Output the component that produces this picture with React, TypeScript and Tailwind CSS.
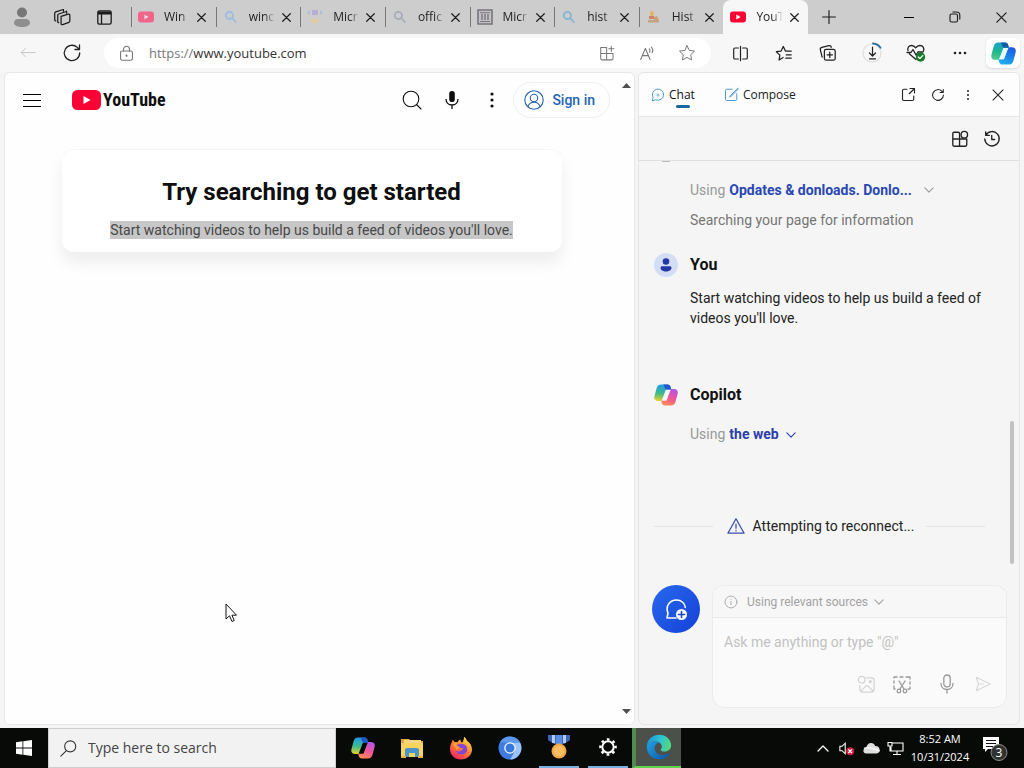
import type { ReactNode } from "react";

const SEGOE = "font-['Open_Sans','Noto_Sans',sans-serif]";

function Line({ size = 20, width = 1.3, children, className = "" }: { size?: number; width?: number; children: ReactNode; className?: string }) {
  return (
    <svg width={size} height={size} viewBox="0 0 20 20" fill="none" stroke="currentColor" strokeWidth={width} strokeLinecap="round" strokeLinejoin="round" className={className} aria-hidden="true">
      {children}
    </svg>
  );
}

function Cross({ size = 9, width = 1.3 }: { size?: number; width?: number }) {
  return (
    <svg width={size} height={size} viewBox="0 0 10 10" stroke="currentColor" strokeWidth={width} strokeLinecap="round" aria-hidden="true">
      <path d="M.8.8l8.4 8.4M9.2.8L.8 9.2" />
    </svg>
  );
}

function Play({ faded = false }: { faded?: boolean }) {
  return (
    <svg width="16" height="12" viewBox="0 0 16 12" aria-hidden="true">
      <rect y=".5" width="16" height="11" rx="3" fill={faded ? "#f0668a" : "#fb0434"} />
      <path d="M6.3 3.6v4.8L10.6 6z" fill="#fff" opacity={faded ? 0.75 : 1} />
    </svg>
  );
}

function Magnifier({ color }: { color: string }) {
  return (
    <svg width="14" height="14" viewBox="0 0 14 14" fill="none" stroke={color} strokeWidth="1.8" strokeLinecap="round" aria-hidden="true">
      <circle cx="5.4" cy="5.4" r="3.6" />
      <path d="M8.2 8.2l3.6 3.8" />
    </svg>
  );
}

function CopilotLogo({ size = 24, blue = false, id, hole }: { size?: number; blue?: boolean; id: string; hole: string }) {
  return (
    <svg width={size} height={size} viewBox="0 0 24 24" aria-hidden="true">
      <defs>
        <linearGradient id={id + "a"} x1="6" y1="1" x2="4" y2="18" gradientUnits="userSpaceOnUse">
          <stop stopColor={blue ? "#18a0c9" : "#1f9bee"} />
          <stop offset=".55" stopColor={blue ? "#1fb98e" : "#3fb98a"} />
          <stop offset="1" stopColor={blue ? "#54c98b" : "#e8d32d"} />
        </linearGradient>
        <linearGradient id={id + "b"} x1="19" y1="6" x2="12" y2="23" gradientUnits="userSpaceOnUse">
          <stop stopColor={blue ? "#1b5be0" : "#b455e8"} />
          <stop offset=".5" stopColor={blue ? "#1c84ea" : "#f0559a"} />
          <stop offset="1" stopColor={blue ? "#23b3f0" : "#fb8f4d"} />
        </linearGradient>
      </defs>
      <path d="M11 22.6c-2 0-2.8-1.1-3.3-2.800l-.6-2.300h5.200L17 5.900h3c3 0 4.400 2 3.600 5.100l-2 7.600c-.7 2.700-2.300 4-4.900 4z" fill={`url(#${id}b)`} />
      <path d="M13 1.400c2.200 0 3 1 3.500 2.800l.6 2.300h-5L7.500 18.100H4.200c-3 0-4.500-2-3.700-5.100l2-7.600c.7-2.700 2.300-4 4.800-4z" fill={`url(#${id}a)`} />
      <path d="M11 1.400h2.500c2 0 2.800 1.200 3.200 2.900l.5 2.200h-4.300c-1.600 0-2-1.200-2.400-2.800-.3-1.300-.7-2.100-1.500-2.300z" fill={blue ? "#105ca8" : "#2557c8"} />
      <path d="M13 7h3.800c-.7 0-1.200.6-1.500 1.600l-2.200 7.300c-.3 1-.8 1.600-1.700 1.600H7.700c.8-.1 1.200-.8 1.500-1.700l2.100-7.100c.3-1.100.8-1.700 1.700-1.700z" fill={hole} />
    </svg>
  );
}

const tabs: { title: string; icon: ReactNode; active?: boolean }[] = [
  { title: "Win", icon: <Play faded /> },
  { title: "winc", icon: <Magnifier color="#9bbce0" /> },
  {
    title: "Micr",
    icon: (
      <svg width="16" height="16" viewBox="0 0 16 16" aria-hidden="true">
        <path d="M5 1h6v5H5z" fill="#b7add6" />
        <path d="M3 1L0 3.500 3 6zM13 1l3 2.500L13 6z" fill="#b0bcd8" />
        <path d="M4 10h8l-1 4H5z" fill="#e0cda4" />
      </svg>
    ),
  },
  { title: "offic", icon: <Magnifier color="#a9adb6" /> },
  {
    title: "Micr",
    icon: (
      <svg width="16" height="16" viewBox="0 0 16 16" fill="none" stroke="#77757a" aria-hidden="true">
        <path d="M1 1h14v14H1z" fill="#c4c2c5" strokeWidth="1.600" />
        <path d="M3 3.700h10M3 12.500h10" />
        <path d="M5 5v6M8 5v6M11 5v6" strokeWidth="1.400" />
      </svg>
    ),
  },
  { title: "hist", icon: <Magnifier color="#83b4d6" /> },
  {
    title: "Hist",
    icon: (
      <svg width="16" height="16" viewBox="0 0 16 16" aria-hidden="true">
        <path d="M5 1l3 3-1 4-3-2z" fill="#dfb45a" />
        <path d="M3 7h5v3H3z" fill="#cf7f6c" />
        <path d="M8 8l3-1 2 4H8z" fill="#c9a56c" />
        <path d="M2 11h11v2.500H2z" fill="#c0a287" />
      </svg>
    ),
  },
  { title: "YouT", icon: <Play />, active: true },
];

function TitleBar() {
  return (
    <header className="flex h-[34px] items-stretch bg-[#cdcdcd] text-[#1b1b1b]">
      <div className="flex w-[131px] shrink-0 items-center">
        <button aria-label="Profile" className="flex w-11 justify-center">
          <svg width="18" height="20" viewBox="0 0 18 20" fill="#777" aria-hidden="true">
            <circle cx="9" cy="5.500" r="5" />
            <path d="M1 16c0-2.500 2-4 4-4h8c2 0 4 1.500 4 4 0 2.500-4 4-8 4s-8-1.500-8-4z" fill="#8e8e8e" />
          </svg>
        </button>
        <button aria-label="Workspaces" className="flex w-9 justify-center">
          <Line size={19}>
            <path d="M8.500 8.800l7.500-2.300c1-.3 1.700.2 1.700 1v6.300c0 .7-.3 1.200-1 1.400l-6.500 2.300c-1 .3-1.700-.2-1.700-1z" />
            <path d="M6 15.500c-.6 0-1-.5-1-1V7.700c0-.7.4-1.200 1-1.400l8-2.600M3 13.500c-.7 0-1.200-.5-1.200-1.200V5.500c0-.7.4-1.200 1-1.400l8-2.500M14.300 5.500V3.400M11 3.300V1.600" />
          </Line>
        </button>
        <button aria-label="Tab actions menu" className="flex w-12 justify-center">
          <svg width="15" height="15" viewBox="0 0 15 15" fill="none" stroke="currentColor" strokeWidth="1.300" aria-hidden="true">
            <rect x=".8" y=".8" width="13.400" height="13.400" rx="1.800" />
            <path d="M1 3h13" strokeWidth="3" />
            <path d="M4.500 4v10" />
          </svg>
        </button>
      </div>
      <nav aria-label="Tabs" className="flex max-w-[677px] min-w-0 flex-1 items-stretch">
        {tabs.map((tab, i) => (
          <div key={i} className={tab.active ? "flex min-w-0 flex-1 items-center rounded-t-lg bg-[#f7f7f7] pr-[3px]" : "flex min-w-0 flex-1 items-center pr-[3px]"}>
            <span className={tab.active ? "mr-1.5 h-5 w-px shrink-0" : "mr-1.5 h-5 w-px shrink-0 bg-[#777]"} />
            <span className="flex w-4 shrink-0 justify-center">{tab.icon}</span>
            <a href="#" className="ml-2.5 min-w-0 flex-1 mask-r-from-60% text-[12px] leading-5 whitespace-nowrap text-[#222]">
              {tab.title}
            </a>
            <button aria-label={`Close ${tab.title}`} className="flex w-[22px] shrink-0 justify-center">
              <Cross />
            </button>
          </div>
        ))}
      </nav>
      <button aria-label="New tab" className="flex w-[42px] items-center justify-center">
        <Line size={16} width={1.4}>
          <path d="M10 2v16M2 10h16" />
        </Line>
      </button>
      <div className="ml-auto flex">
        <button aria-label="Minimize" className="flex w-[46px] items-center justify-center">
          <span className="h-px w-2.5 bg-black" />
        </button>
        <button aria-label="Restore" className="flex w-[46px] items-center justify-center">
          <svg width="12" height="12" viewBox="0 0 12 12" fill="none" stroke="currentColor" strokeWidth="1.100" aria-hidden="true">
            <rect x="1" y="3" width="7.500" height="8" rx="1.500" />
            <path d="M3.500 1h4C9.500 1 10.800 2.200 10.800 4v4.500" />
          </svg>
        </button>
        <button aria-label="Close window" className="flex w-[46px] items-center justify-center">
          <Cross size={11} width={1.1} />
        </button>
      </div>
    </header>
  );
}

function ToolButton({ label, children, className = "w-11" }: { label: string; children: ReactNode; className?: string }) {
  return (
    <button type="button" aria-label={label} className={`flex shrink-0 items-center justify-center ${className}`}>
      {children}
    </button>
  );
}

function Toolbar() {
  return (
    <div className="flex h-[38px] items-center bg-[#f7f7f7] pr-1 pl-1.5 text-[#222]">
      <ToolButton label="Back">
        <Line size={18} width={1.1} className="text-[#c4c4c4]">
          <path d="M18 9.500H2.500M7 5L2.500 9.500 7 14" />
        </Line>
      </ToolButton>
      <ToolButton label="Refresh">
        <Line width={1.3}>
          <path d="M17.700 10A7.700 7.700 0 1 1 15.300 4.400L17.500 6.500M17.500 2v4.500H13" />
        </Line>
      </ToolButton>
      <div className="mr-[7px] ml-2.5 flex h-[30px] min-w-0 flex-1 items-center rounded-full bg-white pr-1 pl-3 text-[#777]">
        <button aria-label="View site information" className="flex w-5 shrink-0 justify-center">
          <Line size={17} width={1.3}>
            <rect x="3" y="7" width="14" height="11" rx="2" />
            <path d="M6.500 7V5a3.500 3.500 0 0 1 7 0v2" />
            <circle cx="10" cy="12.500" r=".6" fill="currentColor" />
          </Line>
        </button>
        <p className="ml-[13px] min-w-0 flex-1 text-[13px] leading-5 text-[#333]">
          <span className="text-[#777]">https://</span>www.youtube.com
        </p>
        <ToolButton label="App available" className="w-10">
          <Line size={17} width={1.2}>
            <path d="M2 3h7v7H2zM2 10v6c0 1 .5 1.500 1.500 1.500H9V10zM9 10h7.500v6c0 1-.5 1.500-1.500 1.500H9M14.500 1.500v6M11.500 4.500h6" />
          </Line>
        </ToolButton>
        <ToolButton label="Read aloud" className="w-10">
          <Line size={17} width={1.3}>
            <path d="M2 17L7.500 4 13 17M4 12.500h7M12 4.500c1 1 1.200 2.500.6 4M14.500 2.500c1.800 1.800 2.100 4.300 1 6.500" />
          </Line>
        </ToolButton>
        <ToolButton label="Add to favorites" className="w-10">
          <Line size={18} width={1.1}>
            <path d="M10 1.800l2.500 5.300 5.800.8-4.200 4 1 5.800-5.100-2.800-5.100 2.800 1-5.800-4.200-4 5.800-.8z" />
          </Line>
        </ToolButton>
      </div>
      <ToolButton label="Split screen">
        <Line size={17} width={1.4}>
          <path d="M7.500 3.500H3.500C2.500 3.500 2 4 2 5v10c0 1 .5 1.500 1.500 1.500h4M12.500 3.500h4c1 0 1.500.5 1.500 1.500v10c0 1-.5 1.500-1.500 1.500h-4M10 1.500v17" />
        </Line>
      </ToolButton>
      <ToolButton label="Favorites">
        <Line size={18} width={1.4}>
          <path d="M9 15L4.500 17.800l.9-5.400L1.500 8.600l5.300-.8L9.200 2.800l2.400 5 6.400.2M12.500 12H18M12 15.800h6" />
        </Line>
      </ToolButton>
      <ToolButton label="Collections">
        <Line size={18} width={1.4}>
          <rect x="6" y="6" width="12" height="12" rx="2" />
          <path d="M12 9v6M9 12h6M3.500 14.500L1.500 6.500c-.3-1.300.4-2.400 1.700-2.700l7.800-1.900c1.300-.3 2.400.4 2.700 1.700" />
        </Line>
      </ToolButton>
      <ToolButton label="Downloads">
        <svg width="24" height="24" viewBox="0 0 24 24" fill="none" stroke="currentColor" strokeWidth="1.200" strokeLinecap="round" strokeLinejoin="round" aria-hidden="true">
          <circle cx="12" cy="12" r="9" stroke="#dedede" />
          <path d="M13 2.500a9.500 9.500 0 0 1 7.500 4.300" stroke="#2e6f9e" strokeWidth="1.800" />
          <path d="M12.500 6v9M9.500 12l3 3 3-3M9.500 17.800h6" />
        </svg>
      </ToolButton>
      <ToolButton label="Browser essentials">
        <svg width="20" height="20" viewBox="0 0 20 20" fill="none" stroke="currentColor" strokeWidth="1.300" strokeLinecap="round" strokeLinejoin="round" aria-hidden="true">
          <path d="M10 16.500L3.500 11M2 7.500C1.200 4.500 3 2.500 5.500 2.500c2 0 3.300 1 4.200 2.300.9-1.300 2.200-2.300 4.200-2.300C17 2.500 18.500 5 17.500 8M1 9.500h4l2-3 3 5.500 2-3h5" />
          <circle cx="14.500" cy="14" r="4.700" fill="#187a2c" stroke="none" />
          <path d="M12.300 14l1.600 1.600 2.800-3" stroke="#fff" />
        </svg>
      </ToolButton>
      <ToolButton label="Settings and more">
        <svg width="14" height="4" viewBox="0 0 14 4" fill="currentColor" aria-hidden="true">
          <circle cx="2" cy="2" r="1.300" />
          <circle cx="7" cy="2" r="1.300" />
          <circle cx="12" cy="2" r="1.300" />
        </svg>
      </ToolButton>
      <button aria-label="Copilot" className="ml-1 flex h-[30px] w-[34px] shrink-0 items-center justify-center rounded-md bg-white shadow">
        <CopilotLogo id="tool" size={25} blue hole="#e6fbff" />
      </button>
    </div>
  );
}

function YouTubePage() {
  return (
    <main className="relative flex min-w-0 flex-1 rounded-md border border-[#e8e8e8] bg-[#fefefe] font-[Roboto,sans-serif]">
      <div className="min-w-0 flex-1">
        <div className="flex h-[54px] items-center pr-2 pl-[7px] text-[#0f0f0f]">
          <button aria-label="Guide" className="flex h-10 w-10 items-center justify-center">
            <svg width="18" height="13" viewBox="0 0 18 13" shapeRendering="crispEdges" aria-hidden="true">
              <path d="M0 0h18v1H0zM0 6h18v1H0zM0 12h18v1H0z" />
            </svg>
          </button>
          <a href="#" className="ml-5 flex items-center gap-0.5">
            <svg width="29" height="20" viewBox="0 0 29 20" aria-hidden="true">
              <rect width="29" height="20" rx="5.500" fill="#fa0437" />
              <path d="M11.500 6v8l7-4z" fill="#fff" />
            </svg>
            <span className="font-['Roboto_Condensed','Liberation_Sans_Narrow',Roboto,sans-serif] text-[18px] leading-6 font-bold">YouTube</span>
          </a>
          <div className="ml-auto flex items-center">
            <button aria-label="Search" className="flex w-10 justify-center">
              <Line size={20} width={1.1}>
                <circle cx="9" cy="9" r="7.800" />
                <path d="M14.500 14.500L19 19" />
              </Line>
            </button>
            <button aria-label="Search with your voice" className="flex w-10 justify-center">
              <svg width="16" height="20" viewBox="0 0 16 20" fill="none" stroke="currentColor" strokeWidth="1.300" aria-hidden="true">
                <rect x="5.200" y="1" width="5.600" height="11" rx="2.800" fill="currentColor" stroke="none" />
                <path d="M2 9c0 3.500 2.500 6 6 6s6-2.500 6-6M8 15v4" />
              </svg>
            </button>
            <button aria-label="Settings" className="flex w-10 justify-center">
              <svg width="4" height="16" viewBox="0 0 4 16" fill="currentColor" aria-hidden="true">
                <circle cx="2" cy="2" r="1.600" />
                <circle cx="2" cy="8" r="1.600" />
                <circle cx="2" cy="14" r="1.600" />
              </svg>
            </button>
            <a href="#" className="ml-px flex h-9 items-center rounded-full border border-[#efefef] pr-3.5 pl-2.5 text-sm font-medium text-[#2464b4]">
              <svg width="20" height="20" viewBox="0 0 20 20" fill="none" stroke="currentColor" strokeWidth="1.100" aria-hidden="true" className="mr-2">
                <circle cx="10" cy="10" r="9.200" />
                <circle cx="10" cy="8" r="3.700" />
                <path d="M4 16.800c.8-3 3-4.500 6-4.500s5.200 1.500 6 4.500" />
              </svg>
              Sign in
            </a>
          </div>
        </div>
        <section className="mx-auto mt-[22px] w-full max-w-[500px] rounded-xl border-t border-[#f5f5f5] bg-white px-6 pt-6 pb-3 text-center shadow-[0_10px_16px_rgba(0,0,0,0.07)]">
          <h1 className="text-2xl leading-9 font-bold text-[#0f0f0f]">Try searching to get started</h1>
          <p className="mt-2.5 text-sm leading-5 text-[#484848]">
            <span className="bg-[#c7c7c7] py-px">Start watching videos to help us build a feed of videos you&apos;ll love.</span>
          </p>
        </section>
      </div>
      <div className="flex w-4 shrink-0 flex-col items-center justify-between py-2.5" aria-hidden="true">
        <svg width="9" height="5" viewBox="0 0 9 5" fill="#505050">
          <path d="M0 5l4.500-5L9 5z" />
        </svg>
        <svg width="9" height="5" viewBox="0 0 9 5" fill="#505050">
          <path d="M0 0l4.500 5L9 0z" />
        </svg>
      </div>
      <svg width="13" height="20" viewBox="0 0 13 20" className="absolute top-[530px] left-[220px]" aria-hidden="true">
        <path d="M1 1v15l3.500-3.200L7 18.500l2.300-1-2.400-5.300H11.500z" fill="#fff" stroke="#111" />
      </svg>
    </main>
  );
}

function Chevron({ className = "" }: { className?: string }) {
  return (
    <svg width="10" height="6" viewBox="0 0 12 7" fill="none" stroke="currentColor" strokeWidth="1.300" strokeLinecap="round" strokeLinejoin="round" className={className} aria-hidden="true">
      <path d="M1 1l5 5 5-5" />
    </svg>
  );
}

function CopilotPane() {
  return (
    <aside className="flex w-[382px] shrink-0 flex-col overflow-hidden rounded-md border border-[#e6e6e6] bg-[#f5f5f5] font-[Roboto,sans-serif] text-sm text-[#222]">
      <div className={`flex h-11 items-center border-b border-[#e7e7e7] bg-[#fdfdfd] pr-1.5 pl-3 ${SEGOE}`}>
        <button className="relative flex items-center gap-1 text-[12px] leading-5 text-[#111]">
          <Line size={14} width={1.4} className="text-[#4b9ac8]">
            <path d="M2 18l1-4.500A8 8 0 1 1 7 17z" />
            <path d="M10 6c.5 2.500 1.500 3.500 4 4-2.500.5-3.500 1.500-4 4-.5-2.500-1.500-3.500-4-4 2.500-.5 3.500-1.500 4-4z" fill="#8fc4e2" stroke="none" />
          </Line>
          Chat
          <span className="absolute right-[5px] -bottom-[3px] h-[3px] w-3.5 rounded-full bg-[#16699a]" />
        </button>
        <button className="ml-[29px] flex items-center gap-1 text-[12px] leading-5">
          <Line size={15} width={1.3} className="text-[#4b9ac8]">
            <path d="M11 3H4C2.500 3 2 3.500 2 5v11c0 1.500.5 2 2 2h11c1.500 0 2-.5 2-2V9M18.500 1.500L9 11l-1.500 2.500L10 12l9.500-9.500" />
          </Line>
          Compose
        </button>
        <div className="ml-auto flex">
          <ToolButton label="Open in new tab" className="w-[30px]">
            <Line size={15} width={1.5}>
              <path d="M8 3H4C3 3 2 4 2 5v11c0 1 1 2 2 2h11c1 0 2-1 2-2v-4M12 2h6v6M18 2l-7 7" />
            </Line>
          </ToolButton>
          <ToolButton label="Reload" className="w-[30px]">
            <Line size={14} width={1.5}>
              <path d="M17.700 10A7.700 7.700 0 1 1 15.300 4.400L17.500 6.500M17.500 2v4.500H13" />
            </Line>
          </ToolButton>
          <ToolButton label="More options" className="w-[30px]">
            <svg width="4" height="12" viewBox="0 0 4 12" fill="currentColor" aria-hidden="true">
              <circle cx="2" cy="2" r="1" />
              <circle cx="2" cy="6" r="1" />
              <circle cx="2" cy="10" r="1" />
            </svg>
          </ToolButton>
          <ToolButton label="Close pane" className="w-[30px]">
            <Cross size={12} width={0.9} />
          </ToolButton>
        </div>
      </div>
      <div className="flex h-11 items-center justify-end border-b border-[#e0e0e0] pr-[11px]">
        <ToolButton label="Plugins" className="w-8">
          <Line size={18} width={1.5}>
            <path d="M9.500 10V4c0-1-.5-1.500-1.500-1.500H3.500C2.500 2.500 2 3 2 4v6zM2 10v6.500c0 1 .5 1.500 1.500 1.500h6v-8zM9.500 10v8h6.500c1 0 1.500-.5 1.500-1.500V10z" />
            <circle cx="14.800" cy="5.200" r="3.600" />
          </Line>
        </ToolButton>
        <ToolButton label="Chat history" className="w-8">
          <Line size={18} width={1.5}>
            <path d="M3.200 5.500A8 8 0 1 1 2 10M3 2v4h4M9.700 6v4.500h3.200" />
          </Line>
        </ToolButton>
      </div>
      <div className="flex min-h-0 flex-1">
        <div className="min-w-0 flex-1 pl-[15px]">
          <div className="ml-2 h-px w-2 bg-[#bdbdbd]" aria-hidden="true" />
          <div className="mt-[18px] pl-9">
            <p className="flex items-center leading-5 text-[#999]">
              Using
              <a href="#" className="ml-1 font-bold text-[#2947b3]">Opdates &amp; donloads. Donlo...</a>
              <Chevron className="ml-3" />
            </p>
            <p className="mt-2.5 leading-5 text-[#767676]">Searching your page for information</p>
          </div>
          <div className="mt-[23px] flex items-center gap-3">
            <svg width="24" height="24" viewBox="0 0 24 24" aria-hidden="true">
              <circle cx="12" cy="12" r="12" fill="#d3def5" />
              <g fill="#2237a5">
                <circle cx="12" cy="8.500" r="3.300" />
                <path d="M6.500 14.800c0-1 .7-1.600 1.700-1.600h7.600c1 0 1.700.6 1.700 1.600 0 2.200-2.500 3.700-5.500 3.700s-5.500-1.500-5.500-3.700z" />
              </g>
            </svg>
            <h2 className="text-base leading-6 font-bold text-[#111]">You</h2>
          </div>
          <p className="mt-[11px] mr-2 pl-9 leading-5">Start watching videos to help us build a feed of videos you&apos;ll love.</p>
          <div className="mt-[55px] flex items-center gap-3">
            <CopilotLogo id="chat" hole="#f6f6f6" />
            <h2 className="text-base leading-6 font-bold text-[#111]">Copilot</h2>
          </div>
          <p className="mt-[17px] flex items-center pl-9 leading-5 text-[#999]">
            Using
            <a href="#" className="ml-1 flex items-center gap-[7px] font-bold text-[#2b3eac]">
              the web
              <Chevron className="mt-0.5" />
            </a>
          </p>
          <div className="mt-[72px] mr-2 flex items-center" role="status">
            <span className="h-px flex-1 bg-[#e5e5e5]" />
            <Line size={18} width={1.4} className="mr-2 ml-3.5 text-[#3551a6]">
              <path d="M10 2L1 18h18zM10 8v4.500M10 15v.3" />
            </Line>
            <span className="leading-5">Attempting to reconnect...</span>
            <span className="ml-3 h-px flex-1 bg-[#e5e5e5]" />
          </div>
        </div>
        <div className="flex w-[26px] shrink-0 justify-end pt-[260px] pr-[5px]" aria-hidden="true">
          <span className="h-[143px] w-1 rounded-full bg-[#c1c1c1]" />
        </div>
      </div>
      <form className="flex items-start gap-3 pr-3 pb-4 pl-[13px]" onSubmit={(e) => e.preventDefault()}>
        <button type="button" aria-label="New topic" className="flex h-12 w-12 shrink-0 items-center justify-center rounded-full bg-linear-to-br from-[#2868ed] to-[#1740d8] text-white">
          <svg width="24" height="24" viewBox="0 0 24 24" fill="none" stroke="currentColor" strokeWidth="1.600" strokeLinecap="round" strokeLinejoin="round" aria-hidden="true">
            <path d="M12 21H3l1-5c-3-7 2-13 8.500-13 5 0 8.500 3.500 8.800 7.500" />
            <circle cx="17.500" cy="17.500" r="5.500" fill="#fff" stroke="none" />
            <path d="M17.500 14.500v6M14.500 17.500h6" stroke="#1745c8" />
          </svg>
        </button>
        <div className="min-w-0 flex-1 rounded-xl border border-[#ebebeb] bg-[#fafafa]">
          <button type="button" className="flex h-8 w-full items-center rounded-t-xl border-b border-[#e9e9e9] bg-[#f7f7f7] pl-[11px] text-xs text-[#a2a2a2]">
            <Line size={14} width={1.2} className="mr-[9px]">
              <circle cx="10" cy="10" r="8.500" />
              <path d="M10 9v5M10 6v.3" />
            </Line>
            Using relevant sources
            <Chevron className="ml-1.5" />
          </button>
          <textarea aria-label="Ask me anything" rows={1} placeholder={'Ask me anything or type "@"'} className="mt-3.5 block h-5 w-full resize-none overflow-hidden bg-transparent px-[11px] text-sm leading-5 outline-none placeholder:text-[#c2c2c2]" />
          <div className="mt-[22px] flex h-[33px] items-start justify-end pr-[5px] text-[#999]">
            <ToolButton label="Add an image" className="h-5 w-9 text-[#d2d2d2]">
              <Line size={19}>
                <path d="M10 3h5c2 0 3 1 3 3v9c0 2-1 3-3 3H6c-2 0-3-1-3-3v-4M4 17l5-5c1-1 2-1 3 0l5 5" />
                <circle cx="5" cy="5" r="3.500" />
                <circle cx="14" cy="7" r="1" />
              </Line>
            </ToolButton>
            <ToolButton label="Add a screenshot" className="h-5 w-9">
              <Line size={20}>
                <path d="M3 15H2v-3M2 9V7M2 4V3h3M8 3h3M14 3h4v2M18 8v2M18 13v2h-2M7 7l5 8M13 7l-5 8" />
                <circle cx="7" cy="17" r="1.800" />
                <circle cx="13" cy="17" r="1.800" />
              </Line>
            </ToolButton>
            <span className="w-[9px]" />
            <ToolButton label="Use microphone" className="h-5 w-9">
              <Line size={20}>
                <rect x="6.800" y="1" width="6.400" height="12" rx="3.200" />
                <path d="M4 9.500c0 3.500 2.500 6 6 6s6-2.500 6-6M10 15.500V19" />
              </Line>
            </ToolButton>
            <ToolButton label="Submit" className="h-5 w-9 text-[#d8d8d8]">
              <Line size={18}>
                <path d="M2.500 2.500L18 10 2.500 17.500 5 10zM5 10h6" />
              </Line>
            </ToolButton>
          </div>
        </div>
      </form>
    </aside>
  );
}

const pinned: { label: string; icon: ReactNode; state?: "open" | "current" }[] = [
  { label: "Copilot", icon: <CopilotLogo id="task" hole="#080a08" /> },
  {
    label: "File Explorer",
    icon: (
      <svg width="24" height="24" viewBox="0 0 24 24" aria-hidden="true">
        <path d="M1 3h8l2 2h12v4H1z" fill="#e5a92f" />
        <path d="M4 4h17v4H4z" fill="#f5d782" />
        <path d="M1 7h22v14H1z" fill="#f8d45c" />
        <path d="M5 21v-7c0-1 .7-2 2-2h10c1.300 0 2 1 2 2v7h-4v-4H9v4z" fill="#4b95ca" />
        <path d="M1 20h5v2H1zM18 20h5v2h-5z" fill="#e9b43c" />
      </svg>
    ),
  },
  {
    label: "Firefox",
    icon: (
      <svg width="24" height="24" viewBox="0 0 24 24" aria-hidden="true">
        <defs>
          <linearGradient id="fox" x1="19" y1="2" x2="6" y2="22" gradientUnits="userSpaceOnUse">
            <stop stopColor="#ffe14a" />
            <stop offset=".45" stopColor="#ff8a2c" />
            <stop offset="1" stopColor="#f5295e" />
          </linearGradient>
        </defs>
        <path d="M15 .8c1.500 1 2.600 2.500 3 4 2.700 1.800 5 4.800 5 8.700C23 19 18.500 23.500 12 23.500S1 19 1 13c0-3 1-5.500 2-7l.7-2.500L5.500 6l3 .3C9 5 10 4 11.500 3.500c-.3 1.500.3 2.300 1.500 3.200C14.500 5.500 15 3 15 .8z" fill="url(#fox)" />
        <path d="M8 9c2-1.500 5-1.500 7.200-.5 2 1 3 2.500 3 4.700 0 3.200-2.500 5.300-5.700 5.300-2.700 0-5-1.500-5.500-4 1.300 1.200 3 1.500 4.500.6 1.400-.8 1.500-1.700 2.800-2-.5-1-1.800-1.200-3.200-1L8.500 11z" fill="#8446d5" />
        <path d="M3.500 8c1.300-1.500 3.500-2 5-1.200-1 .8-1.200 1.700-1.200 2.600l3.700 1.800c-.8 1.200-2.500 1.500-3.500 2.800" fill="#ff9c31" />
      </svg>
    ),
  },
  {
    label: "Chromium",
    icon: (
      <svg width="24" height="24" viewBox="0 0 24 24" aria-hidden="true">
        <circle cx="12" cy="12" r="11.500" fill="#3e7de0" />
        <path d="M12 6.500h10A11.500 11.500 0 0 1 12 23.500L17 15z" fill="#9cc3fa" />
        <path d="M2 6.300A11.500 11.500 0 0 1 22 6.500H12z" fill="#5a99ee" />
        <circle cx="12" cy="12" r="5.800" fill="#f5f9ff" />
        <circle cx="12" cy="12" r="4.500" fill="#3478de" />
      </svg>
    ),
  },
  {
    label: "Medal",
    state: "open",
    icon: (
      <svg width="24" height="24" viewBox="0 0 24 24" aria-hidden="true">
        <path d="M1 0h22v5l-6 4H7L1 5z" fill="#3e65b8" />
        <path d="M5 0h3v8H5zM16 0h3v8h-3z" fill="#b2cdf5" />
        <path d="M9 0h6v10H9z" fill="#5b8de4" />
        <circle cx="12" cy="16" r="7.500" fill="#f3a846" />
        <circle cx="12" cy="16" r="5.300" fill="#f9bd65" />
      </svg>
    ),
  },
  {
    label: "Settings",
    state: "open",
    icon: (
      <svg width="20" height="20" viewBox="0 0 20 20" fill="none" stroke="#fff" aria-hidden="true">
        <circle cx="10" cy="10" r="5.700" strokeWidth="2" />
        <circle cx="10" cy="10" r="7.600" strokeWidth="2.400" strokeDasharray="2.600 3.370" transform="rotate(-10 10 10)" />
      </svg>
    ),
  },
  {
    label: "Microsoft Edge",
    state: "current",
    icon: (
      <svg width="26" height="26" viewBox="0 0 24 24" aria-hidden="true">
        <defs>
          <linearGradient id="wave" x1="2" y1="5" x2="23" y2="12" gradientUnits="userSpaceOnUse">
            <stop stopColor="#2397d7" />
            <stop offset=".5" stopColor="#2fc4cf" />
            <stop offset="1" stopColor="#5bd975" />
          </linearGradient>
          <linearGradient id="deep" x1="3" y1="8" x2="18" y2="23" gradientUnits="userSpaceOnUse">
            <stop stopColor="#1b9ce2" />
            <stop offset="1" stopColor="#1159a8" />
          </linearGradient>
        </defs>
        <path d="M.8 10.500C1.500 4.500 6.300.7 12 .7c6.500 0 11.200 4.600 11.200 9.700 0 3.500-2.600 5.800-6 5.800-2.500 0-4-.9-3.600-2 .2-.6 1-.9 1-2.700 0-2.500-2.600-4.900-6-4.900C5.200 6.600 2 8 .8 10.500z" fill="url(#wave)" />
        <path d="M.8 10.500C2 8 5 6.600 8.600 6.600c1.500 0 3 .5 4 1.300C9.500 8 7.500 11 8 14c.6 3.800 5 6.500 9.500 5.200 2-.6 3.500-1.300 4.100-1.100.5.200-.7 2-2.700 3.300A12 12 0 0 1 12 23.400C5.800 23.400.8 18.500.8 12z" fill="url(#deep)" />
      </svg>
    ),
  },
];

function Taskbar() {
  return (
    <footer className={`flex h-10 shrink-0 bg-[#080a08] text-white ${SEGOE}`}>
      <button aria-label="Start" className="flex w-12 shrink-0 items-center justify-center">
        <svg width="16" height="16" viewBox="0 0 16 16" fill="#fff" aria-hidden="true">
          <path d="M0 2.200l6.500-.9v6.200H0zM7.300 1.200L16 0v7.500H7.300zM0 8.400h6.500v6.300L0 13.800zM7.300 8.400H16V16l-8.700-1.200z" />
        </svg>
      </button>
      <label className="flex w-72 min-w-0 items-center border border-[#cfcfcf] bg-[#f2f2f2] pl-[11px] text-[#333]">
        <Line size={17} width={1.3} className="shrink-0">
          <circle cx="12" cy="7.500" r="6.500" />
          <path d="M7.500 12.500L1 19" />
        </Line>
        <input aria-label="Search" placeholder="Type here to search" className="ml-[11px] w-full min-w-0 bg-transparent text-[14px] leading-5 outline-none placeholder:text-[#444]" />
      </label>
      <nav aria-label="Pinned apps" className="ml-0.5 flex shrink-0">
        {pinned.map((app) =>
          app.state === "current" ? (
            <button key={app.label} aria-label={app.label} className="flex w-[49px] items-center justify-center border-b-2 border-l-4 border-b-[#5fd34c] border-l-[#528b4b] bg-[#4b504b]">
              {app.icon}
            </button>
          ) : (
            <button key={app.label} aria-label={app.label} className="flex w-[49px] flex-col items-center">
              <span className="my-auto">{app.icon}</span>
              {app.state === "open" && <span className="h-0.5 w-10 bg-[#76b0e0]" />}
            </button>
          ),
        )}
      </nav>
      <div className="ml-auto flex shrink-0 items-center">
        <button aria-label="Show hidden icons" className="flex w-6 justify-center">
          <Chevron className="h-[7px] w-3 rotate-180" />
        </button>
        <button aria-label="Volume muted" className="flex w-6 justify-center">
          <svg width="16" height="15" viewBox="0 0 18 16" fill="none" stroke="#fff" strokeWidth="1.200" aria-hidden="true">
            <path d="M1 5.500h2.500L7 2v12l-3.500-3.500H1z" />
            <circle cx="12.500" cy="11" r="4.500" fill="#d51e3c" stroke="none" />
            <path d="M10.500 9l4 4M14.500 9l-4 4" strokeWidth="1.500" />
          </svg>
        </button>
        <button aria-label="OneDrive" className="flex w-6 justify-center">
          <svg width="17" height="12" viewBox="0 0 17 12" fill="#dedede" aria-hidden="true">
            <path d="M3.500 11.500C.5 11.500 0 9 .7 7.500c.5-1 1.400-1.500 2.500-1.500C3.500 3 5.500 1 8 1c2 0 3.500 1 4.200 3 2.500-.2 4.500 1.500 4.500 4 0 2-1.500 3.500-3.500 3.500z" />
            <path d="M1 6.500C4 4.500 9 6 16.500 9" stroke="#f7f7f7" strokeWidth="1.500" fill="none" />
          </svg>
        </button>
        <button aria-label="Network" className="flex w-6 justify-center">
          <svg width="17" height="15" viewBox="0 0 17 15" fill="none" stroke="#fff" strokeWidth="1.100" aria-hidden="true">
            <path d="M5 2h11v8H4V6M10 10v3.500M6 13.500h8M1 1.500h4V5H1zM3 5v5.500" />
          </svg>
        </button>
        <button className="ml-[3px] w-[60px] text-center text-[11px] leading-[18px] whitespace-nowrap">
          8:52 AM
          <br />
          10/31/2024
        </button>
        <button aria-label="3 notifications" className="ml-3 flex w-[42px] shrink-0">
          <svg width="26" height="26" viewBox="0 0 26 26" aria-hidden="true">
            <path d="M1 2h16v12H6l-3 3v-3H1z" fill="#fff" />
            <path d="M4 5.500h10M4 8.500h10M4 11.500h7" stroke="#111" />
            <circle cx="17" cy="17.500" r="8" fill="#303230" stroke="#8a8c8a" />
            <text x="17" y="22" textAnchor="middle" fontSize="12" fill="#fff">3</text>
          </svg>
        </button>
      </div>
    </footer>
  );
}

export default function App() {
  return (
    <div className="flex min-h-screen flex-col bg-[#f5f5f5]">
      <div className={SEGOE}>
        <TitleBar />
        <Toolbar />
      </div>
      <div className="flex flex-1 gap-[3px] px-1 pb-[3px]">
        <YouTubePage />
        <CopilotPane />
      </div>
      <Taskbar />
    </div>
  );
}
